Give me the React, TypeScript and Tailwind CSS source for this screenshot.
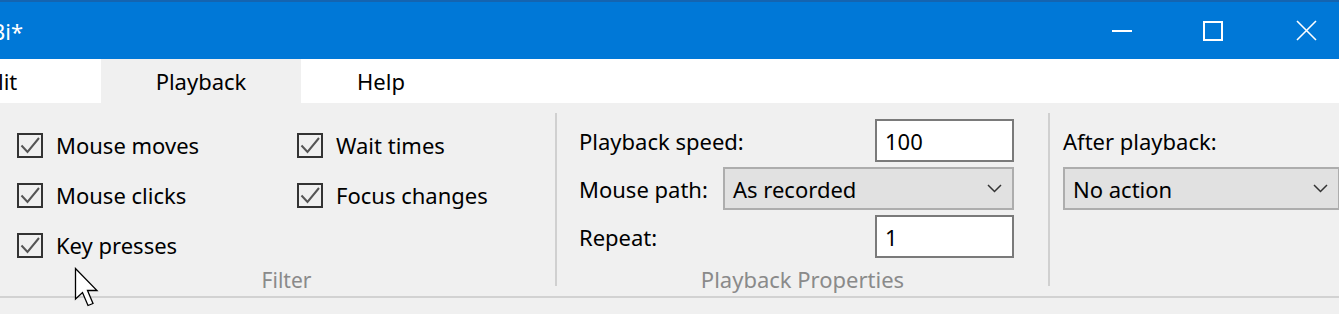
import React from "react";

const font = { fontFamily: '"Noto Sans", "Open Sans", sans-serif' };

function CheckBox({ label }: { label: string }) {
  return (
    <div className="flex h-[50px] items-center">
      <div className="h-[25px] w-[26px] border-2 border-[#333333]">
        <svg width="22" height="21" viewBox="0 0 22 21">
          <path d="M2.5 10.5 L8.5 17 L20 3" fill="none" stroke="#555555" strokeWidth="2" />
        </svg>
      </div>
      <span className="ml-[13px] text-[22px] leading-none text-black">{label}</span>
    </div>
  );
}

function Chevron() {
  return (
    <svg width="15" height="9" viewBox="0 0 15 9">
      <path d="M1 1 L7.5 7.5 L14 1" fill="none" stroke="#333333" strokeWidth="1.5" />
    </svg>
  );
}

function Select({ value, className }: { value: string; className: string }) {
  return (
    <div
      className={`flex h-[43px] shrink-0 items-center justify-between border-2 border-[#adadad] bg-[#e1e1e1] pl-[8px] pr-[10px] ${className}`}
    >
      <span className="text-[22px] leading-none text-black">{value}</span>
      <Chevron />
    </div>
  );
}

function TextBox({ value }: { value: string }) {
  return (
    <div className="flex h-[43px] w-[139px] items-center border-2 border-[#7a7a7a] bg-white pl-[8px]">
      <span className="text-[22px] leading-none text-black">{value}</span>
    </div>
  );
}

function GroupLabel({ children, className = "" }: { children: React.ReactNode; className?: string }) {
  return (
    <div className={`mt-auto pb-[6px] text-center text-[21px] leading-none text-[#8a8a8a] ${className}`}>
      {children}
    </div>
  );
}

export default function App() {
  return (
    <div className="relative h-[314px] w-[1339px] overflow-hidden bg-[#f0f0f0]" style={font}>
      {/* Title bar */}
      <div className="flex h-[59px] items-center border-t-2 border-[#1464b0] bg-[#0078d7] text-white">
        <span className="ml-[-9px] text-[22px] leading-none">Bi*</span>
        <div className="ml-auto flex h-full items-center">
          <div className="flex h-full w-[92px] items-center justify-center">
            <div className="h-[2px] w-[20px] bg-white" />
          </div>
          <div className="flex h-full w-[90px] items-center justify-center">
            <div className="h-[20px] w-[20px] border-2 border-white" />
          </div>
          <div className="flex h-full w-[81px] items-center pl-[38px]">
            <svg width="21" height="21" viewBox="0 0 21 21">
              <path d="M1 1 L20 20 M20 1 L1 20" stroke="white" strokeWidth="1.6" />
            </svg>
          </div>
        </div>
      </div>

      {/* Menu bar */}
      <div className="flex h-[44px] bg-white text-[22px] leading-none text-black">
        <div className="flex w-[101px] shrink-0 items-center">
          <span className="ml-[-2px]">lit</span>
        </div>
        <div className="flex w-[200px] shrink-0 items-center justify-center bg-[#f0f0f0]">Playback</div>
        <div className="flex w-[160px] shrink-0 items-center justify-center">Help</div>
      </div>

      {/* Ribbon */}
      <div className="flex h-[195px] border-b-2 border-[#d2d2d2]">
        {/* Filter group */}
        <div className="flex w-[555px] shrink-0 flex-col">
          <div className="grid grid-cols-[280px_1fr] pl-[17px] pt-[17px]">
            <div className="flex flex-col">
              <CheckBox label="Mouse moves" />
              <CheckBox label="Mouse clicks" />
              <CheckBox label="Key presses" />
            </div>
            <div className="flex flex-col">
              <CheckBox label="Wait times" />
              <CheckBox label="Focus changes" />
            </div>
          </div>
          <GroupLabel className="pl-[18px]">Filter</GroupLabel>
        </div>
        <div className="my-[10px] w-[2px] shrink-0 bg-[#d0d0d0]" />

        {/* Playback properties group */}
        <div className="flex w-[491px] shrink-0 flex-col">
          <div className="flex flex-col gap-[5px] pl-[22px] pr-[34px] pt-[16px]">
            <div className="flex items-center justify-between">
              <span className="text-[22px] leading-none">Playback speed:</span>
              <TextBox value="100" />
            </div>
            <div className="flex items-center justify-between">
              <span className="text-[22px] leading-none">Mouse path:</span>
              <Select value="As recorded" className="w-[291px]" />
            </div>
            <div className="flex items-center justify-between">
              <span className="text-[22px] leading-none">Repeat:</span>
              <TextBox value="1" />
            </div>
          </div>
          <GroupLabel className="text-[22px]">Playback Properties</GroupLabel>
        </div>
        <div className="my-[10px] w-[2px] shrink-0 bg-[#d0d0d0]" />

        {/* After playback group */}
        <div className="flex shrink-0 flex-col pl-[13px] pt-[16px]">
          <div className="flex h-[43px] items-center">
            <span className="text-[22px] leading-none">After playback:</span>
          </div>
          <Select value="No action" className="mt-[5px] w-[277px]" />
        </div>
      </div>

      {/* Mouse cursor */}
      <svg className="absolute left-[74px] top-[267px]" width="30" height="41" viewBox="0 0 30 41">
        <path
          d="M1.5 1.5 L1.5 32 L8.5 25.5 L14 38.5 L19 36.5 L13.5 23.5 L23 23.5 Z"
          fill="white"
          stroke="black"
          strokeWidth="1.3"
          strokeLinejoin="miter"
        />
      </svg>
    </div>
  );
}
